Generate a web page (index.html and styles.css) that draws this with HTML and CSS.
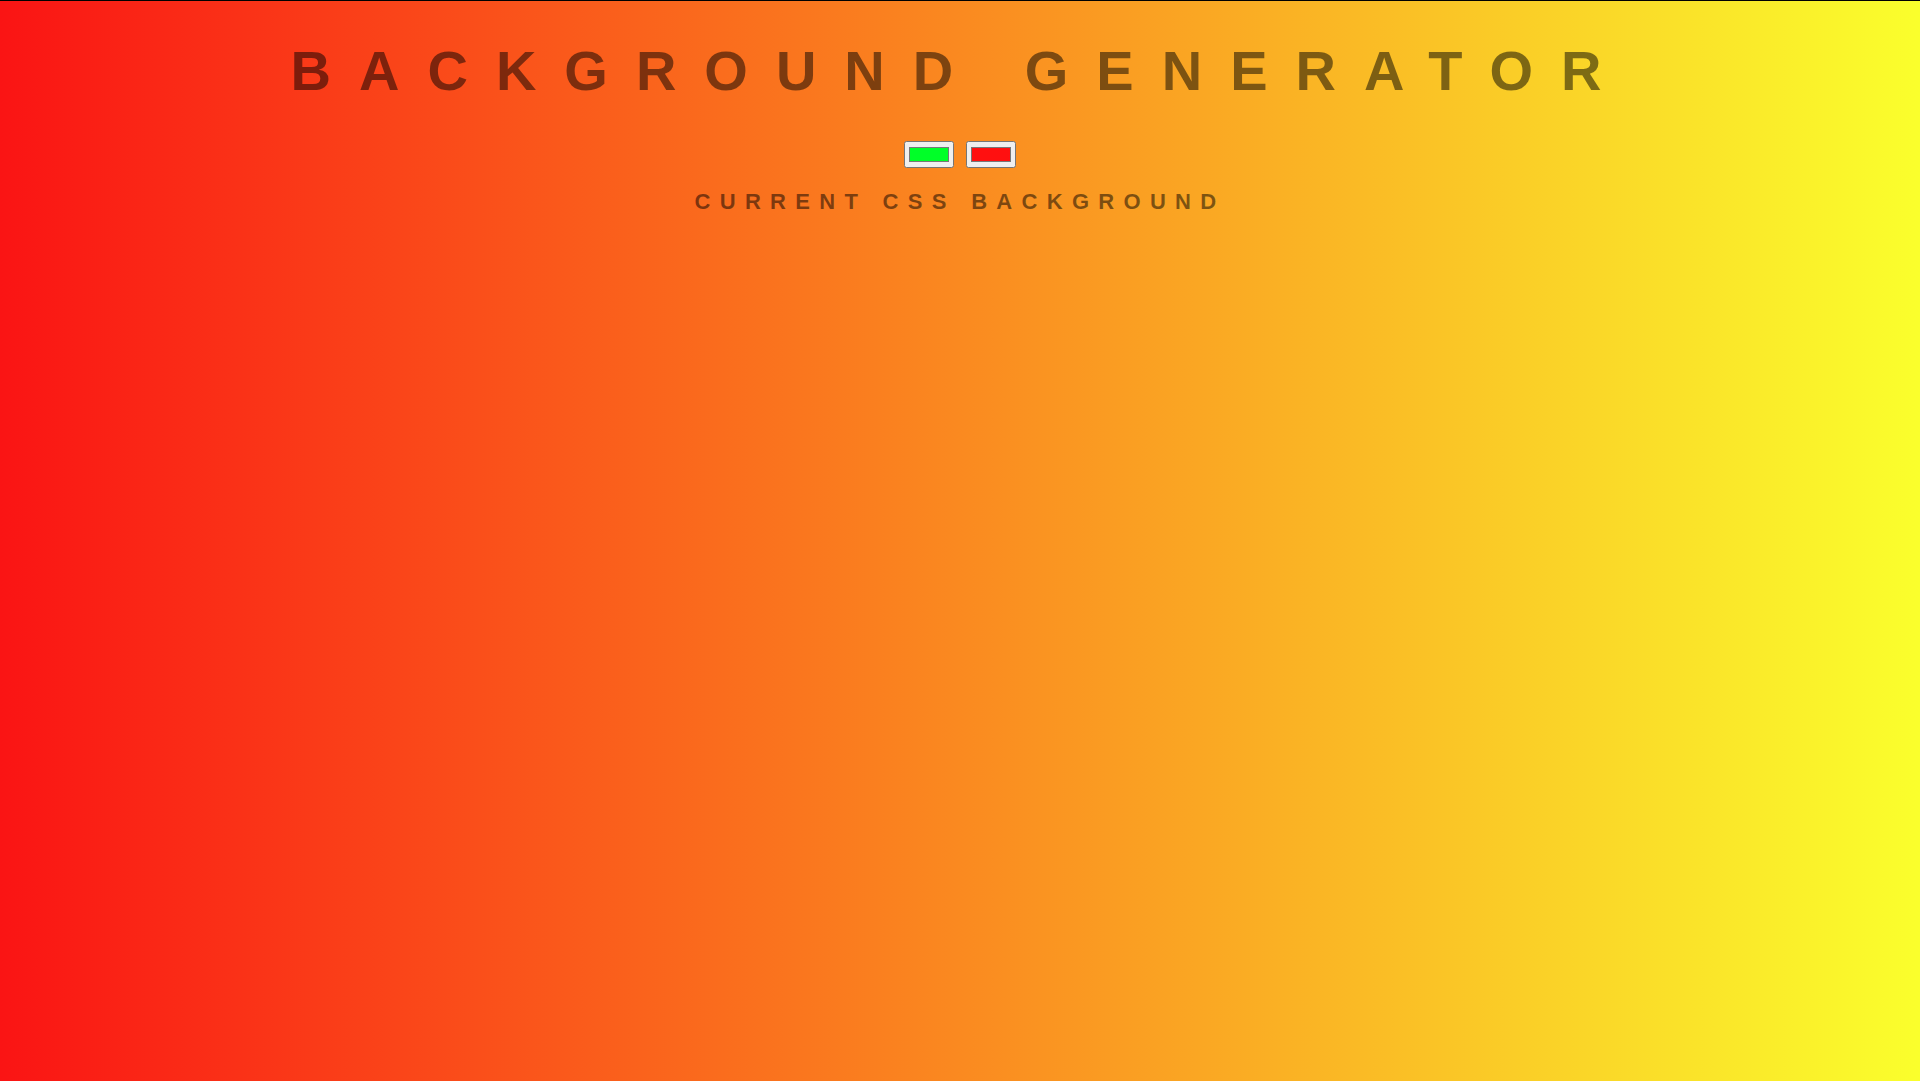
FILE: index.html
```html
<!DOCTYPE html>
<html>
<head>
<meta charset="utf-8">
<title>Gradient Background</title>
<link rel="stylesheet" href="styles.css">
</head>
<body class="page">
<h1 class="title">Background Generator</h1>
<div class="pickers"><input class="picker" type="color" value="#00ff28"> <input class="picker" type="color" value="#ff1010"></div>
<h3 class="current">Current CSS Background</h3>
</body>
</html>
```
FILE: styles.css
```css
html {
  height: 100%;
  border-top: 1px solid #000;
  box-sizing: border-box;
  background: linear-gradient(to right, #fa1414, #faff2c);
}

.page {
  margin: 0;
  min-height: 100%;
  font-family: "Liberation Sans", Arial, sans-serif;
  color: rgba(0, 0, 0, 0.5);
  text-align: center;
  text-transform: uppercase;
  letter-spacing: 0.5em;
}

.title {
  margin: 37px 0 38px;
  font: bold 56px "Liberation Sans", Arial, sans-serif;
  letter-spacing: 0.5em;
}

.pickers {
  line-height: 27px;
}

.picker {
  margin: 0;
  vertical-align: top;
}

.current {
  margin: 21px 0 0;
  font: bold 22px "Liberation Sans", Arial, sans-serif;
  letter-spacing: 9.3px;
}
```
